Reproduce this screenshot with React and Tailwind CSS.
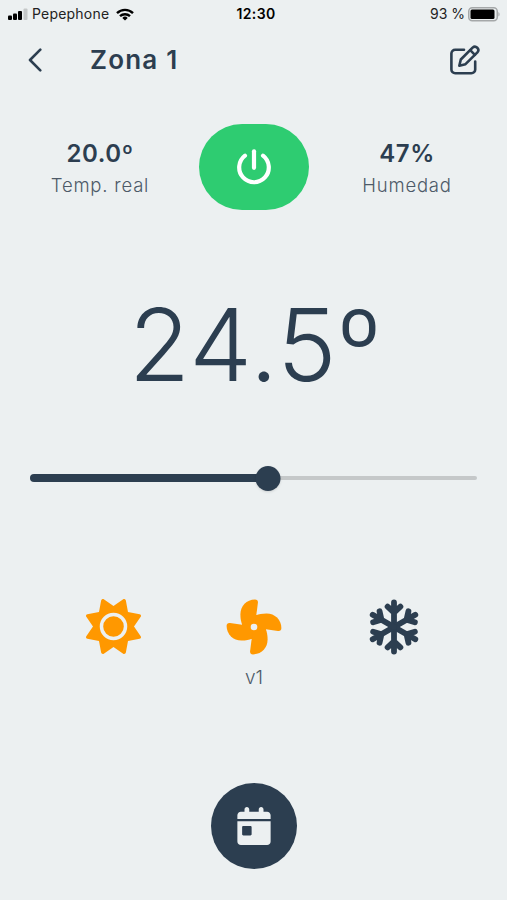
import { FaCalendarDay, FaSun } from 'react-icons/fa6';

function EditIcon() {
  return (
    <svg viewBox="0 0 32 32" className="size-8 fill-none stroke-current stroke-[2.6]" strokeLinecap="round" strokeLinejoin="round">
      <path d="M15 5.7H6.2a3.8 3.8 0 0 0-3.8 3.8v16a3.8 3.8 0 0 0 3.8 3.8h16.2a3.8 3.8 0 0 0 3.8-3.8V17.5" />
      <path d="M10.3 21.7l1.5-6.2L23.6 3.6a3.4 3.4 0 0 1 4.8 4.8L16.5 20.2z" />
      <path d="M21.2 6.2l4.7 4.7" />
    </svg>
  );
}

function FanIcon() {
  return (
    <svg viewBox="-28 -28 56 56" className="size-14 fill-[#ff9800]">
      <rect x="-12" y="-12" width="24" height="24" />
      {[0, 90, 180, 270].map((angle) => (
        <path
          key={angle}
          transform={`rotate(${angle})`}
          d="M2.3 -11.8L3.9 -24Q4.2 -27.4 1 -27.4C-7.5 -27.2 -13.6 -21 -13.6 -12.5C-13.6 -8 -12.8 -4.5 -11.8 -2.3L0 0z"
        />
      ))}
      <circle r="3.3" className="fill-[#ecf0f1]" />
    </svg>
  );
}

function SnowflakeIcon() {
  return (
    <svg viewBox="-28 -28 56 56" className="mr-0.5 size-14 fill-none stroke-current stroke-[5.8]" strokeLinecap="round" strokeLinejoin="round">
      {[0, 60, 120, 180, 240, 300].map((angle) => (
        <path key={angle} transform={`rotate(${angle})`} d="M0 0V-24.6M-6.4 -20.4L0 -14.5L6.4 -20.4" />
      ))}
    </svg>
  );
}

function StatusBar() {
  return (
    <div className="grid h-7 grid-cols-3 items-center pr-[7px] pl-2 text-[14px] leading-none text-[#222]">
      <div className="flex items-center">
        <svg viewBox="0 0 20 12" className="h-3 w-5 shrink-0 fill-black">
          <rect x="0" y="7.5" width="4" height="4.5" rx="1" />
          <rect x="5" y="5.5" width="4" height="6.5" rx="1" />
          <rect x="10" y="3" width="4" height="9" rx="1" />
          <rect x="15.5" y="0.5" width="4" height="11.5" rx="1" className="fill-[#c4c7c8]" />
        </svg>
        <span className="ml-1 w-[78px] tracking-[0.2px]">Pepephone</span>
        <svg viewBox="0 0 18 13" className="ml-[6px] h-[13px] w-[18px] fill-none stroke-black stroke-[2.4]">
          <path d="M1 5.2a11.4 11.4 0 0 1 16 0" />
          <path d="M4 8.2a7.2 7.2 0 0 1 10 0" />
          <path d="M9 12.6 6.3 9.9a3.9 3.9 0 0 1 5.4 0z" className="fill-black stroke-none" />
        </svg>
      </div>
      <span className="pl-1 text-center font-semibold tracking-[0.4px] text-black">12:30</span>
      <div className="flex items-center justify-end gap-[3px]">
        <span className="whitespace-nowrap">93 %</span>
        <svg viewBox="0 0 32 15" className="h-[15px] w-8">
          <rect x="0.75" y="0.75" width="28.5" height="13" rx="3.5" className="fill-none stroke-[#a5a8a9] stroke-[1.5]" />
          <rect x="2.5" y="2.5" width="24" height="9.5" rx="1.5" className="fill-black" />
          <path d="M30.4 5v4.6c1.6-.8 1.6-3.8 0-4.6z" className="fill-[#a5a8a9]" />
        </svg>
      </div>
    </div>
  );
}

function Header() {
  return (
    <header className="flex h-16 items-center pr-[26px] pl-7">
      <svg viewBox="0 0 14 24" className="h-6 w-3.5 fill-none stroke-current stroke-[2.6]" strokeLinecap="round" strokeLinejoin="round">
        <path d="M12.3 1.7 2 12l10.3 10.3" />
      </svg>
      <h1 className="ml-12 flex-1 pb-0.5 text-[26px] font-semibold tracking-[1.2px]">Zona 1</h1>
      <EditIcon />
    </header>
  );
}

function Reading({ value, label }) {
  return (
    <div className="flex w-[140px] flex-col items-center pt-[5px]">
      <span className="text-[24px] leading-8 font-semibold tracking-[0.6px]">{value}</span>
      <span className="-mt-px text-[18.5px] leading-8 font-light tracking-[0.8px] text-[#4d5a68]">{label}</span>
    </div>
  );
}

function PowerButton() {
  return (
    <button className="flex h-[86px] w-[110px] items-center justify-center rounded-full bg-[#2ecc71]">
      <svg viewBox="0 0 36 36" className="size-9 fill-none stroke-white stroke-[4.2]" strokeLinecap="round">
        <path d="M18 2.3v16.5" />
        <path d="M9 6.7a14.8 14.8 0 1 0 18 0" />
      </svg>
    </button>
  );
}

function Slider({ percent }) {
  return (
    <div className="relative mx-[30px] flex h-7 items-center">
      <div className="h-1 w-full rounded-full bg-[#c5c8c9]" />
      <div className="absolute left-0 h-2 rounded-full bg-[#2c3e50]" style={{ width: `${percent}%` }} />
      <div
        className="absolute size-[25px] -translate-x-1/2 rounded-full bg-[#2c3e50] shadow-sm"
        style={{ left: `${percent}%` }}
      />
    </div>
  );
}

export default function App() {
  return (
    <div className="flex h-[900px] w-[507px] flex-col overflow-hidden bg-[#ecf0f1] font-[Inter,sans-serif] text-[#2c3e50]">
      <StatusBar />
      <Header />

      <section className="mt-8 flex items-center justify-between px-[30px]">
        <Reading value="20.0º" label="Temp. real" />
        <PowerButton />
        <Reading value="47%" label="Humedad" />
      </section>

      <div className="mt-[84px] pl-[3px] text-center text-[100px] leading-[102px] font-light tracking-[0.8px]">24.5º</div>

      <div className="mt-[68px]">
        <Slider percent={53.2} />
      </div>

      <section className="mt-[107px] grid grid-cols-3 justify-items-center pr-[42px] pl-[43px]">
        <FaSun className="size-[55px] text-[#ff9800]" />
        <div className="flex flex-col items-center">
          <FanIcon />
          <span className="mt-[7px] text-[19px] leading-8 font-light text-[#4d5a68]">v1</span>
        </div>
        <SnowflakeIcon />
      </section>

      <button className="mx-auto mt-[89px] flex size-[86px] items-center justify-center rounded-full bg-[#2c3e50]">
        <FaCalendarDay className="size-[38px] text-[#ecf0f1]" />
      </button>
    </div>
  );
}
